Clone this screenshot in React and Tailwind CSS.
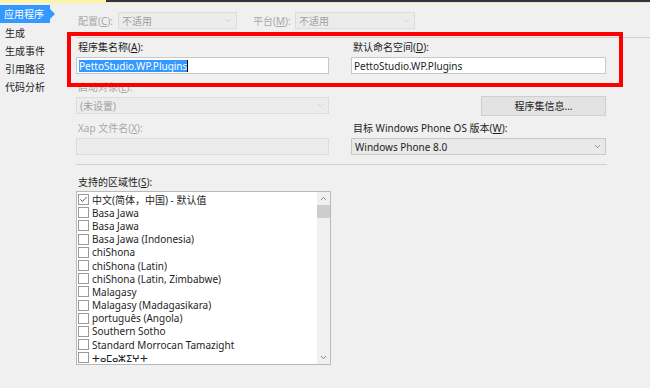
import { Check, ChevronDown, ChevronUp } from "lucide-react";

const FONT = {
  fontFamily: '"Noto Sans", "Noto Sans CJK SC", sans-serif',
};

const navItems = ["生成", "生成事件", "引用路径", "代码分析"];

const cultures = [
  "中文(简体，中国) - 默认值",
  "Basa Jawa",
  "Basa Jawa",
  "Basa Jawa (Indonesia)",
  "chiShona",
  "chiShona (Latin)",
  "chiShona (Latin, Zimbabwe)",
  "Malagasy",
  "Malagasy (Madagasikara)",
  "português (Angola)",
  "Southern Sotho",
  "Standard Morrocan Tamazight",
  "ⵜⴰⵎⴰⵣⵉⵖⵜ",
];

function Label({ text, hot, disabled, className = "" }) {
  return (
    <div
      className={`whitespace-nowrap text-[10px] leading-[12px] ${disabled ? "text-[#a8a8a8]" : "text-[#1e1e1e]"} ${className}`}
    >
      {text}(<span className="underline">{hot}</span>):
    </div>
  );
}

function Select({ value, disabled, className = "" }) {
  return (
    <div
      className={`flex items-center justify-between border px-[3px] text-[10px] leading-none ${
        disabled
          ? "border-[#dcdcdc] bg-[#ececec] text-[#a0a0a0]"
          : "border-[#c8c8c8] bg-[#e9e9e9] text-[#1e1e1e]"
      } ${className}`}
    >
      <span>{value}</span>
      <ChevronDown
        size={9}
        strokeWidth={1.6}
        className={disabled ? "text-[#bdbdbd]" : "text-[#555]"}
      />
    </div>
  );
}

function TextBox({ children, className = "" }) {
  return (
    <div
      className={`flex items-center border border-[#c8c8c8] bg-white px-[2px] text-[10px] leading-[12px] text-[#1e1e1e] ${className}`}
    >
      {children}
    </div>
  );
}

export default function App() {
  return (
    <div
      className="relative h-[388px] w-[650px] overflow-hidden bg-[#f0f0f0]"
      style={FONT}
    >
      {/* top strip */}
      <div className="flex h-[3px]">
        <div className="w-[106px] bg-[#fdf4a8]" />
        <div className="flex-1 border-b border-[#f3e9a0] bg-[#2d3348]" />
      </div>

      <div className="flex">
        {/* left nav */}
        <div className="w-[76px] shrink-0 pt-[2px]">
          <div className="flex items-center">
            <div className="flex h-[18px] w-[50px] items-center bg-[#3399ff] pl-[4px] text-[10px] text-white">
              应用程序
            </div>
            <div className="h-0 w-0 border-y-[5px] border-l-[5px] border-y-transparent border-l-[#3399ff]" />
          </div>
          <div className="mt-[1px] flex flex-col">
            {navItems.map((item) => (
              <div
                key={item}
                className="flex h-[18px] items-center pl-[5px] text-[10px] text-[#1e1e1e]"
              >
                {item}
              </div>
            ))}
          </div>
        </div>

        {/* content */}
        <div className="flex-1">
          <div className="mt-[9px] flex h-[17px] items-center">
            <Label text="配置" hot="C" disabled className="ml-[2px] w-[40px]" />
            <Select value="不适用" disabled className="h-[17px] w-[119px]" />
            <Label text="平台" hot="M" disabled className="ml-[16px] w-[42px]" />
            <Select value="不适用" disabled className="h-[17px] w-[120px]" />
          </div>

          <div className="mt-[8px] h-px bg-[#d0d0d0]" />

          <div className="grid w-[530px] grid-cols-[253px_255px] gap-x-[22px]">
            {/* left column */}
            <div>
              <Label text="程序集名称" hot="A" className="ml-[2px] mt-[3px] h-[12px]" />
              <TextBox className="mt-[4px] h-[17px]">
                <span className="bg-[#3399ff] text-white">PettoStudio.WP.Plugins</span>
                <span className="h-[12px] w-px bg-black" />
              </TextBox>
              <Label text="启动对象" hot="E" disabled className="ml-[2px] mt-[7px] h-[12px]" />
              <Select value="(未设置)" disabled className="mt-[4px] h-[17px]" />
              <Label text="Xap 文件名" hot="X" disabled className="ml-[2px] mt-[8px] h-[12px]" />
              <div className="mt-[4px] h-[17px] border border-[#dcdcdc] bg-[#ececec]" />
            </div>

            {/* right column */}
            <div>
              <Label text="默认命名空间" hot="D" className="ml-[2px] mt-[3px] h-[12px]" />
              <TextBox className="mt-[4px] h-[17px]">PettoStudio.WP.Plugins</TextBox>
              <div className="mt-[22px] flex justify-end">
                <div className="flex h-[20px] w-[125px] items-center justify-center border border-[#cfcfcf] bg-[#e3e3e3] text-[10px] text-[#1e1e1e]">
                  程序集信息...
                </div>
              </div>
              <Label
                text="目标 Windows Phone OS 版本"
                hot="W"
                className="ml-[2px] mt-[6px] h-[12px]"
              />
              <Select value="Windows Phone 8.0" className="mt-[4px] h-[17px]" />
            </div>
          </div>

          <div className="mt-[9px] h-px w-[531px] bg-[#d0d0d0]" />

          <Label text="支持的区域性" hot="S" className="ml-[2px] mt-[11px] h-[12px]" />

          <div className="mt-[3px] flex h-[174px] w-[255px] border border-[#b9b9b9] bg-white">
            <div className="flex-1 pt-px">
              {cultures.map((c, i) => (
                <div key={i} className="flex h-[13.2px] items-center pl-[1px]">
                  <div className="flex h-[11px] w-[11px] shrink-0 items-center justify-center border border-[#9a9a9a] bg-white">
                    {i === 0 && <Check size={9} strokeWidth={2} className="text-[#222]" />}
                  </div>
                  <span className="ml-[3px] whitespace-nowrap text-[10px] leading-[12px] text-[#1e1e1e]">
                    {c}
                  </span>
                </div>
              ))}
            </div>
            <div className="flex w-[13px] flex-col items-center bg-[#f0f0f0]">
              <div className="flex h-[13px] items-center">
                <ChevronUp size={9} strokeWidth={2} className="text-[#606060]" />
              </div>
              <div className="h-[13px] w-[13px] bg-[#cdcdcd]" />
              <div className="flex-1" />
              <div className="flex h-[13px] items-center">
                <ChevronDown size={9} strokeWidth={2} className="text-[#606060]" />
              </div>
            </div>
          </div>
        </div>
      </div>

      {/* red highlight box */}
      <div className="absolute left-[67px] top-[32px] h-[55px] w-[556px] border-[4px] border-[#ff0000]" />
    </div>
  );
}
